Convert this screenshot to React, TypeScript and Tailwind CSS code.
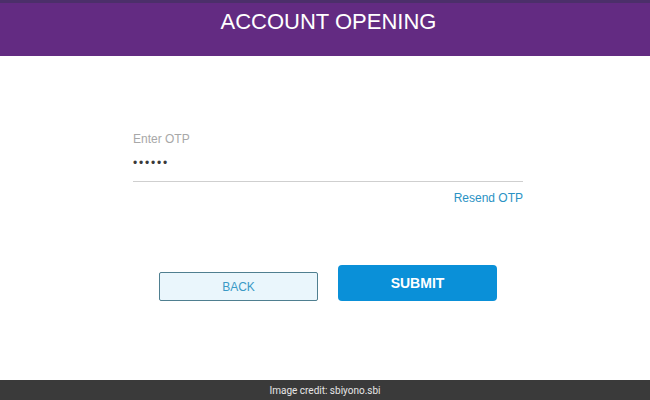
export default function App() {
  return (
    <div className="flex h-[400px] w-[650px] flex-col bg-white" style={{ fontFamily: '"Liberation Sans", Arial, sans-serif' }}>
      <header className="h-[56px] border-t-[3px] border-[#4c2f6a] bg-[#632b82]">
        <h1 className="pt-[5px] pl-[7px] text-center text-[22px] leading-[28px] text-white">ACCOUNT OPENING</h1>
      </header>
      <main className="flex-1">
        <div className="ml-[133px] w-[390px] pt-[75px]">
          <div className="text-[12px] leading-[16px] text-[#a8a8a8]">Enter OTP</div>
          <div className="h-[35px] border-b border-[#cfcfcf] pt-[8px] text-[12px] leading-[16px] tracking-[1.8px] text-[#3a3a3a]">
            ••••••
          </div>
          <div className="mt-[8px] text-right text-[12px] leading-[16px] text-[#2a92c4]">Resend OTP</div>
        </div>
        <div className="mt-[59px] ml-[159px] flex items-end gap-[20px]">
          <button className="h-[29px] w-[159px] rounded-[2px] border border-[#4f7f90] bg-[#eaf6fc] text-[12px] text-[#3a9ac6]">
            BACK
          </button>
          <button className="h-[36px] w-[159px] rounded-[4px] bg-[#0a90d8] text-[14px] font-bold text-white">
            SUBMIT
          </button>
        </div>
      </main>
      <footer
        className="flex h-[20px] items-center justify-center bg-[#3a3a3a] text-[10px] text-[#e6e6e6]"
        style={{ fontFamily: 'Roboto, "Liberation Sans", sans-serif' }}
      >
        Image credit: sbiyono.sbi
      </footer>
    </div>
  );
}
